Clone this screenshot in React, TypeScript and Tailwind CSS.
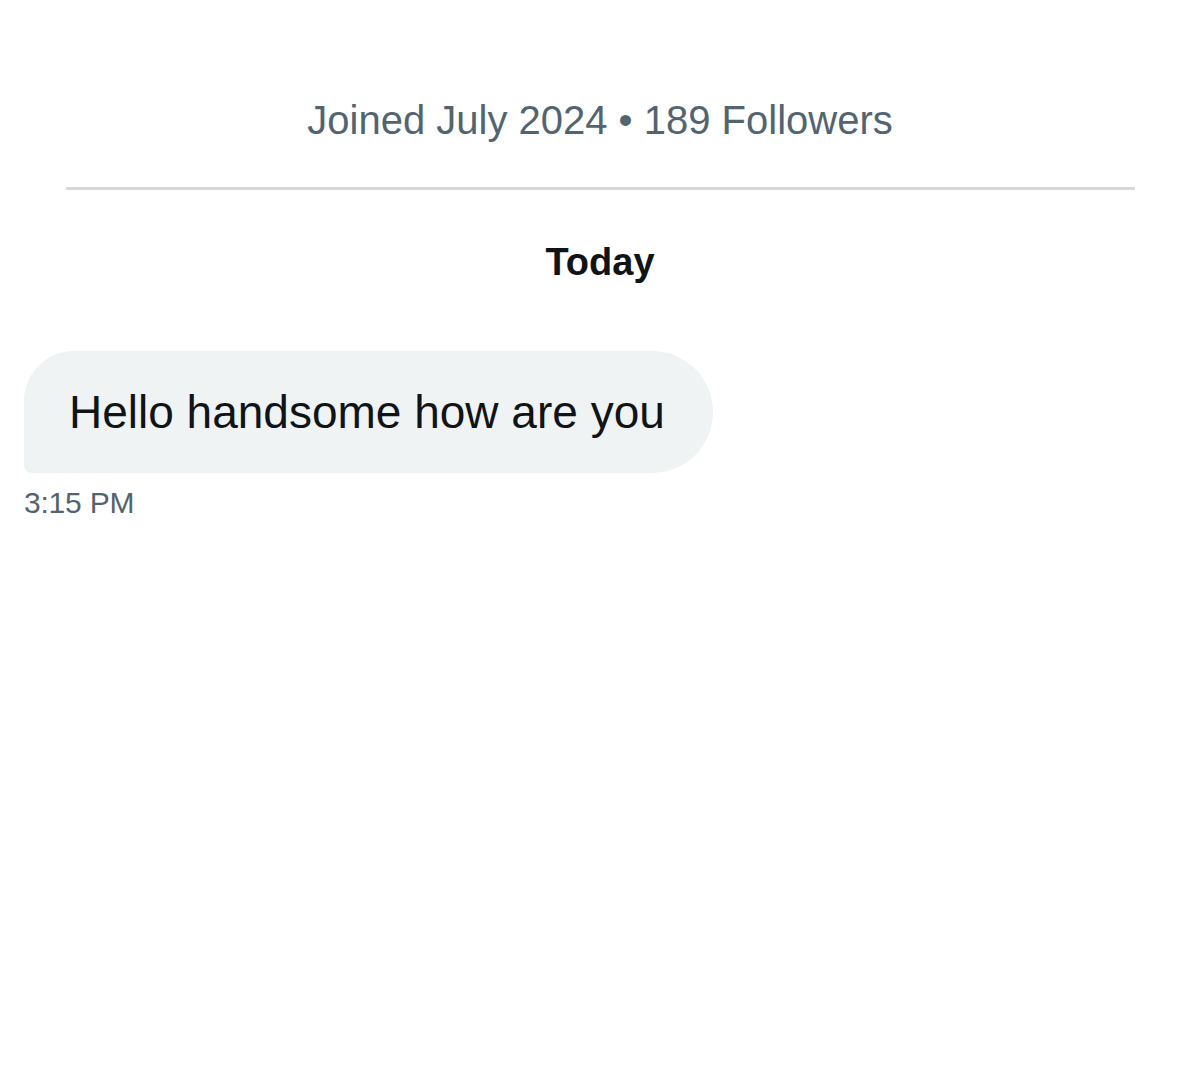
export default function App() {
  return (
    <div className="min-h-[1066px] w-[1200px] bg-white font-['Liberation_Sans',Arial,sans-serif]">
      <div className="pt-[96px] text-center text-[40px] leading-[48px] text-[#536471]">
        Joined July 2024 • 189 Followers
      </div>
      <div className="mt-[43px] ml-[66px] mr-[65px] h-[3px] bg-[#d6d9dc]" />
      <div className="mt-[50px] text-center text-[38px] font-bold leading-[44px] text-[#0f1419]">
        Today
      </div>
      <div className="mt-[67px] px-[24px]">
        <div className="flex items-center">
          <div className="flex h-[122px] items-center rounded-tl-[50px] rounded-tr-[61px] rounded-br-[61px] rounded-bl-[8px] bg-[#eff3f4] pl-[45px] pr-[48px] text-[46px] text-[#0f1419]">
            Hello handsome how are you
          </div>
        </div>
        <div className="mt-[12px] text-[30px] leading-[36px] tracking-[-0.2px] text-[#536471]">
          3:15 PM
        </div>
      </div>
    </div>
  );
}
